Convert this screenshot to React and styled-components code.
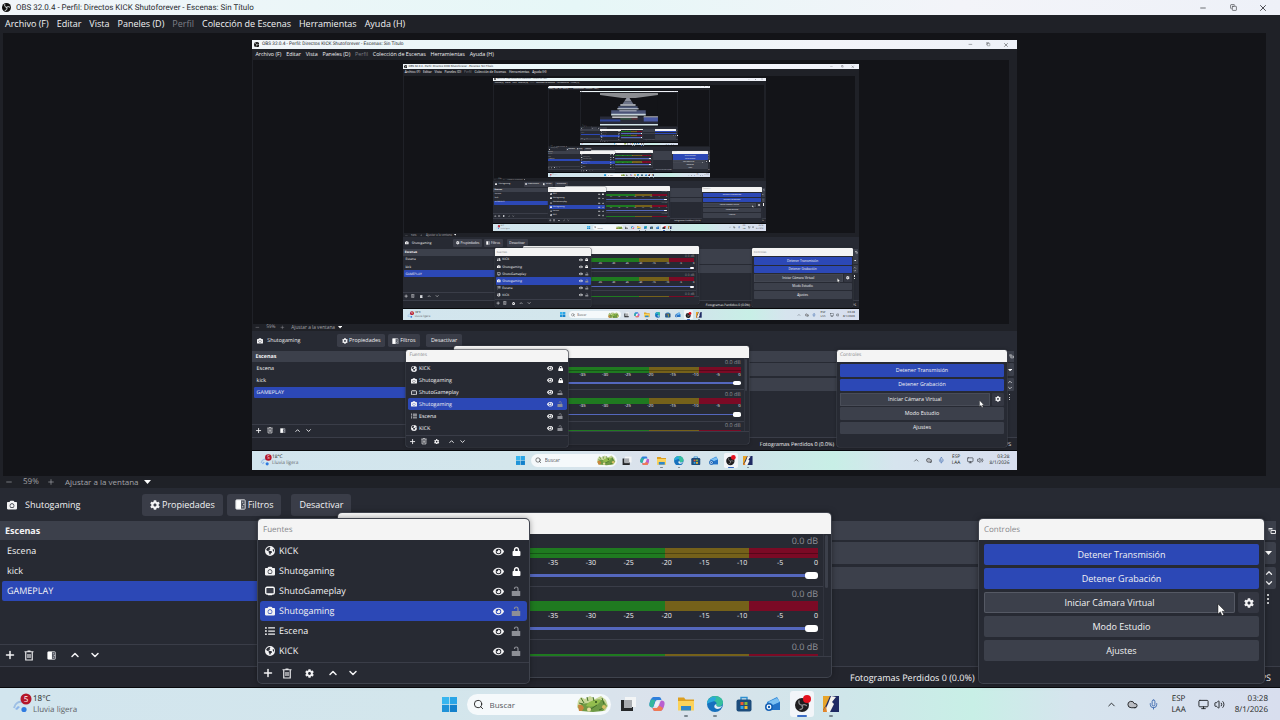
import styled, { createGlobalStyle, css } from "styled-components"
import { useId } from "react"
import { FaCamera, FaCog, FaEye, FaListUl, FaLock } from "react-icons/fa"
import { FaEarthAmericas } from "react-icons/fa6"
import {
  ChevronDown,
  ChevronUp,
  Cloud,
  Copy,
  Mic,
  Minus,
  Monitor,
  Plus,
  Search,
  Volume2,
  X,
} from "lucide-react"

// how many times the captured desktop shows up inside its own preview,
// past this it is only a few pixels wide and gets drawn as a shape
const MAX_DEPTH = 5

const MENU = [
  { label: "Archivo (F)" },
  { label: "Editar" },
  { label: "Vista" },
  { label: "Paneles (D)" },
  { label: "Perfil", disabled: true },
  { label: "Colección de Escenas" },
  { label: "Herramientas" },
  { label: "Ayuda (H)" },
]

const SCENES = ["Escena", "kick", "GAMEPLAY"]

const SOURCES = [
  { name: "KICK", icon: FaEarthAmericas, locked: true },
  { name: "Shutogaming", icon: FaCamera, locked: true },
  { name: "ShutoGameplay", icon: DisplayIcon },
  { name: "Shutogaming", icon: FaCamera, selected: true },
  { name: "Escena", icon: FaListUl },
  { name: "KICK", icon: FaEarthAmericas },
]

const TICKS = [-35, -30, -25, -20, -15, -10, -5, 0]

export default function App() {
  return (
    <>
      <GlobalStyle />
      <Desktop depth={0} />
    </>
  )
}

function Desktop({ depth }) {
  return (
    <Screen $nested={depth > 0}>
      <ObsWindow>
        <TitleBar>
          <ObsLogo size={9} />
          <Title>
            OBS 32.0.4 - Perfil: Directos KICK Shutoforever - Escenas: Sin Título
          </Title>
          <WindowButton aria-label="Minimizar">
            <Minus size={8} strokeWidth={2} />
          </WindowButton>
          <WindowButton aria-label="Restaurar">
            <Copy size={7} strokeWidth={2} />
          </WindowButton>
          <WindowButton aria-label="Cerrar">
            <X size={10} strokeWidth={2} />
          </WindowButton>
        </TitleBar>

        <MenuBar>
          {MENU.map(({ label, disabled }) => (
            <MenuItem key={label} disabled={disabled}>
              {label}
            </MenuItem>
          ))}
        </MenuBar>

        <Preview>
          <Canvas>
            {depth < MAX_DEPTH ? <Desktop depth={depth + 1} /> : <Tunnel />}
          </Canvas>
        </Preview>

        <ZoomBar>
          <IconButton aria-label="Alejar">
            <Minus size={8} />
          </IconButton>
          <ZoomValue>59%</ZoomValue>
          <IconButton aria-label="Acercar">
            <Plus size={8} />
          </IconButton>
          <ZoomMode>
            Ajustar a la ventana
            <Caret />
          </ZoomMode>
        </ZoomBar>

        <ContextBar>
          <ContextSource>
            <FaCamera size={10} />
            Shutogaming
          </ContextSource>
          <ContextButton>
            <FaCog size={10} />
            Propiedades
          </ContextButton>
          <ContextButton>
            <FilterIcon size={11} />
            Filtros
          </ContextButton>
          <ContextButton $spaced>Desactivar</ContextButton>
        </ContextBar>

        <Docks>
          <ScenesDock />
          <TransitionsDock />
        </Docks>

        <StatusBar>
          <StatusText>Fotogramas Perdidos 0 (0.0%)</StatusText>
          <StatusText>FPS</StatusText>
        </StatusBar>

        <MixerWindow />
        <SourcesWindow />
        <ControlsWindow />
      </ObsWindow>
      <TaskBar />
    </Screen>
  )
}

function ScenesDock() {
  return (
    <Dock>
      <DockHeader>Escenas</DockHeader>
      <List $grow>
        {SCENES.map((name) => (
          <SceneRow key={name} $selected={name === "GAMEPLAY"}>
            {name}
          </SceneRow>
        ))}
      </List>
      <DockToolbar>
        <ListButtons>
          <FilterIcon size={9} />
        </ListButtons>
      </DockToolbar>
    </Dock>
  )
}

function TransitionsDock() {
  return (
    <Dock>
      <DockHeader>
        <DockHeaderIcon aria-label="Desacoplar">
          <UndockIcon />
        </DockHeaderIcon>
      </DockHeader>
      <TransitionFields>
        <Field>
          <FieldSelect aria-label="Transición" />
          <Caret />
        </Field>
        <Field>
          <FieldInput aria-label="Duración" />
          <Spinner>
            <ChevronUp size={10} strokeWidth={3} />
            <ChevronDown size={10} strokeWidth={3} />
          </Spinner>
        </Field>
        <MoreButton aria-label="Más opciones">
          <Dot />
          <Dot />
          <Dot />
        </MoreButton>
      </TransitionFields>
    </Dock>
  )
}

function ListButtons({ children }) {
  return (
    <>
      <IconButton aria-label="Añadir">
        <Plus size={12} strokeWidth={3} />
      </IconButton>
      <IconButton aria-label="Eliminar">
        <TrashIcon />
      </IconButton>
      <IconButton aria-label="Opciones" $wide>
        {children}
      </IconButton>
      <IconButton aria-label="Subir">
        <ChevronUp size={12} strokeWidth={3} />
      </IconButton>
      <IconButton aria-label="Bajar">
        <ChevronDown size={12} strokeWidth={3} />
      </IconButton>
    </>
  )
}

function SourcesWindow() {
  return (
    <SourcesFrame>
      <FloatTitle>Fuentes</FloatTitle>
      <List>
        {SOURCES.map(({ name, icon: Icon, locked, selected }, i) => (
          <SourceRow key={i} $selected={selected}>
            <Icon size={10} />
            <SourceName>{name}</SourceName>
            <FaEye size={11} />
            <LockSlot $locked={locked}>
              {locked ? <FaLock size={9} /> : <UnlockedIcon size={10} />}
            </LockSlot>
          </SourceRow>
        ))}
      </List>
      <DockToolbar>
        <ListButtons>
          <FaCog size={9} />
        </ListButtons>
      </DockToolbar>
    </SourcesFrame>
  )
}

function MixerWindow() {
  return (
    <MixerFrame>
      <FloatTitle />
      <MixerBody>
        <Channels>
          <Channel active />
          <Channel />
          <Channel folded />
        </Channels>
        <ScrollTrack>
          <ScrollThumb />
        </ScrollTrack>
      </MixerBody>
    </MixerFrame>
  )
}

function Channel({ active, folded }) {
  const id = useId()

  // only the top of the last channel fits in the panel
  if (folded) {
    return (
      <ChannelBox $folded>
        <ChannelLevel as="span">0.0 dB</ChannelLevel>
        <MeterBar />
      </ChannelBox>
    )
  }

  return (
    <ChannelBox>
      <ChannelLevel htmlFor={id}>0.0 dB</ChannelLevel>
      <MeterBar $stereo={active} />
      <Scale>
        {TICKS.map((tick) => (
          <Tick key={tick}>{tick}</Tick>
        ))}
      </Scale>
      <Fader id={id} type="range" min="0" max="100" defaultValue="100" />
    </ChannelBox>
  )
}

function ControlsWindow() {
  return (
    <ControlsFrame>
      <FloatTitle>Controles</FloatTitle>
      <ControlsBody>
        <ControlButton $active>Detener Transmisión</ControlButton>
        <ControlButton $active>Detener Grabación</ControlButton>
        <ControlRow>
          <ControlButton $hover>Iniciar Cámara Virtual</ControlButton>
          <GearButton aria-label="Configurar cámara virtual">
            <FaCog size={10} />
          </GearButton>
          <Pointer viewBox="0 0 10 16">
            <path
              d="M1 1v11.5l2.7-2.4 1.9 4.3 2-.9-1.9-4.1h3.5z"
              fill="#fff"
              stroke="#111"
              strokeWidth="0.5"
            />
          </Pointer>
        </ControlRow>
        <ControlButton>Modo Estudio</ControlButton>
        <ControlButton>Ajustes</ControlButton>
      </ControlsBody>
    </ControlsFrame>
  )
}

function TaskBar() {
  return (
    <Bar>
      <Weather>
        <WeatherIcon />
        <WeatherText>
          <span>18°C</span>
          <Muted>Lluvia ligera</Muted>
        </WeatherText>
      </Weather>
      <Apps>
        <AppButton aria-label="Inicio">
          <StartIcon />
        </AppButton>
        <SearchBox>
          <Search size={11} color="#222" strokeWidth={2} />
          <SearchInput placeholder="Buscar" aria-label="Buscar" />
          <SearchArt />
        </SearchBox>
        <AppButton aria-label="Vista de tareas">
          <TaskViewIcon />
        </AppButton>
        <AppButton aria-label="Copilot">
          <CopilotIcon />
        </AppButton>
        <AppButton aria-label="Explorador" $running>
          <FolderIcon />
        </AppButton>
        <AppButton aria-label="Edge" $running>
          <EdgeIcon />
        </AppButton>
        <AppButton aria-label="Store">
          <StoreIcon />
        </AppButton>
        <AppButton aria-label="Outlook">
          <MailIcon />
        </AppButton>
        <AppButton aria-label="OBS Studio" $running $current>
          <ObsTaskIcon />
        </AppButton>
        <AppButton aria-label="Juego" $running>
          <GameIcon />
        </AppButton>
      </Apps>
      <Tray>
        <ChevronUp size={11} />
        <Cloud size={11} fill="#b9bcc2" />
        <Mic size={11} color="#3a67ae" />
        <TrayText>
          <span>ESP</span>
          <span>LAA</span>
        </TrayText>
        <TrayGroup>
          <Monitor size={11} />
          <Volume2 size={11} />
        </TrayGroup>
        <Clock>
          <span>03:28</span>
          <span>8/1/2026</span>
        </Clock>
      </Tray>
    </Bar>
  )
}

/* the far end of the mirrored previews */
function Tunnel() {
  return (
    <svg width="764" height="430" viewBox="0 0 57 32">
      <path d="M0 0h57v32H0z" fill="#131418" />
      <path d="M0 0h57v2l-22 3H22L0 2z" fill="#8b8d91" />
      <path d="M26 5h3l2 3h-7z" fill="#8f93a0" />
      <path d="M24 8h7l2 3H22z" fill="#6d7488" />
      <path d="M20 11h15v1.500H20z" fill="#c3c9d2" />
      <path d="M18 13h19v3H18z" fill="#4d5878" />
      <path d="M17 15h21v1H17z" fill="#cdd5dc" />
      <path d="M11 17h34v4H11z" fill="#4a5377" />
      <path d="M19 17h17v1H19z" fill="#b7bbc6" />
      <path d="M11 20.500h34V22H11z" fill="#c5d3da" />
      <path d="M0 23h57v8H0z" fill="#282b38" />
      <path d="M0 26h20v2H0z" fill="#2f459c" />
      <path d="M12 23h25v1.200H12zM43 23h14v1H43z" fill="#f0f0f0" />
      <path d="M43 24h14v4H43z" fill="#4a5aa5" />
      <path d="M20 25h11v1H20z" fill="#3a6a45" />
      <path d="M31 25h6v1h-6z" fill="#7a3b3d" />
      <path d="M0 30.500h57V32H0z" fill="#d5e6ea" />
    </svg>
  )
}

/* icons */

function ObsLogo({ size }) {
  return (
    <svg width={size} height={size} viewBox="0 0 20 20">
      <circle cx="10" cy="10" r="10" fill="#111" />
      <g fill="none" stroke="#e8eef0" strokeWidth="2.2" strokeLinecap="round">
        <path d="M6 3.500c-1 3.500 1 6 4 6" />
        <path d="M17 9c-2.800-2-6-1-7 1.500" />
        <path d="M7 16.500c3 0 5-2.500 3.800-5.500" />
      </g>
    </svg>
  )
}

function Caret() {
  return (
    <svg width="7" height="4" viewBox="0 0 7 4">
      <path d="M0 0h7L3.500 4z" fill="#fff" />
    </svg>
  )
}

function DisplayIcon({ size }) {
  return (
    <svg width={size} height={size} viewBox="0 0 20 20">
      <rect x="1.500" y="2.500" width="17" height="13.500" rx="2.500" fill="#3a3d48" stroke="#fff" strokeWidth="2.600" />
      <path d="M6 16h8v2.500H6z" fill="#fff" />
    </svg>
  )
}

function UnlockedIcon({ size }) {
  return (
    <svg width={size} height={size} viewBox="0 0 20 20">
      <rect x="1.500" y="10" width="17" height="10" rx="1" fill="currentColor" />
      <path d="M7 6V5.500a3.500 3.500 0 0 1 7 0V11" fill="none" stroke="currentColor" strokeWidth="2.400" />
    </svg>
  )
}

function FilterIcon({ size }) {
  return (
    <svg width={size} height={size} viewBox="0 0 20 20">
      <rect x="1.500" y="1.500" width="17" height="17" rx="1.500" fill="#50545f" stroke="#d5d6da" strokeWidth="1.800" />
      <path d="M2 2h9v16H2z" fill="#fff" />
      <path d="M13 5h2v2h-2zM15 9h2v2h-2zM13 13h2v2h-2z" fill="#d5d6da" />
    </svg>
  )
}

function TrashIcon() {
  return (
    <svg width="10" height="11" viewBox="0 0 20 22" fill="none" stroke="#e8e8ea" strokeWidth="2.400">
      <path d="M1 3.500h18M7 2h6M3.500 4v16h13V4M8 8v8M12 8v8" />
    </svg>
  )
}

function UndockIcon() {
  return (
    <svg width="8" height="8" viewBox="0 0 16 16">
      <path d="M1 2h8v3H1z" fill="#e8e8ea" />
      <path d="M6 7h9v6H6z" fill="none" stroke="#e8e8ea" strokeWidth="2" />
      <path d="M2 4v4h4" fill="none" stroke="#a5a7ad" strokeWidth="1.400" />
    </svg>
  )
}

function WeatherIcon() {
  return (
    <svg width="20" height="22" viewBox="0 0 20 22">
      <path d="M2 15c1-5 5-7 9-6" fill="none" stroke="#9dbfe4" strokeWidth="2" />
      <path d="M3 16l3-3 2 1-3 3z" fill="#8db6ea" />
      <circle cx="12" cy="16.500" r="2.600" fill="#2f7be0" />
      <circle cx="14" cy="6" r="5.500" fill="#b5162a" />
      <text x="14" y="9" textAnchor="middle" fontSize="8" fill="#fff">
        5
      </text>
    </svg>
  )
}

function StartIcon() {
  return (
    <svg width="15" height="15" viewBox="0 0 16 16">
      <path d="M0 0h7.600v7.600H0z" fill="#38b6ef" />
      <path d="M8.400 0H16v7.600H8.400z" fill="#2aa5e6" />
      <path d="M0 8.400h7.600V16H0z" fill="#1f93d8" />
      <path d="M8.400 8.400H16V16H8.400z" fill="#1380cb" />
    </svg>
  )
}

function SearchArt() {
  return (
    <svg width="32" height="18" viewBox="0 0 32 18">
      <path d="M1 6l3-4 4 2 5-3 5 3 6-3 5 4 2 6-3 5H3l-3-4z" fill="#c9d89a" />
      <path d="M1 12c5-6 8-2 13-5s8-3 13-1l3 5-4 5-10 1-12-1z" fill="#6f9a45" />
      <path d="M9 11c3-6 9-6 15-6-2 5-8 8-15 6z" fill="#93bd4e" />
      <path d="M4 3l3 5M10 2l1 4M25 3l2 6M16 2l1 4M22 15l7-3M14 14l6-4M2 8l4 1" stroke="#44702a" strokeWidth="1" />
      <path d="M1 10c3-1 5 0 6 3l-2 3H2z" fill="#c9853d" />
      <circle cx="12" cy="14.500" r="2" fill="#e8dca0" />
      <circle cx="27" cy="12" r="2" fill="#d8c067" />
      <circle cx="19" cy="7" r="1" fill="#2f4f1a" />
    </svg>
  )
}

function TaskViewIcon() {
  return (
    <svg width="16" height="16" viewBox="0 0 16 16">
      <path d="M5 1h11v10H5z" fill="#f3f5f6" />
      <path d="M1 4h3v7h9v4H1z" fill="#252729" />
      <path d="M4 4h8v8H4z" fill="#a9acb0" />
    </svg>
  )
}

function CopilotIcon() {
  return (
    <svg width="16" height="16" viewBox="0 0 16 16">
      <path d="M4.500 1H10c1.500 0 2 1 2.500 3H8C6.500 4 5.500 9 4 11.500 1 11.500 0 10 .5 7.500S2.500 1 4.500 1z" fill="#2f7fdc" />
      <path d="M2 3.500L6.500 4C5.500 6 5 9 4 11.500c-3 0-4-1.500-3.500-4z" fill="#35b79c" />
      <path d="M11.500 15H6c-1.500 0-2-1-2.500-3H8c1.500 0 2.500-5 4-7.500 3 0 4 1.500 3.500 4S13.500 15 11.500 15z" fill="#b85fd0" />
      <path d="M11.500 15H6c-1.500 0-2-1-2.500-3H8l2-2.500 4 2.500c-.6 1.800-1.500 3-2.500 3z" fill="#ef7a54" />
      <path d="M6.500 5.500h3.800L9 10.500H5.500z" fill="#f0eef4" />
    </svg>
  )
}

function FolderIcon() {
  return (
    <svg width="16" height="16" viewBox="0 0 16 16">
      <path d="M0 1.500h6l1.500 2H16V14H0z" fill="#dd9f20" />
      <path d="M0 5h16v9.500H0z" fill="#fbd25a" />
      <path d="M3 10h10v4.500H3z" fill="#2f86c9" />
    </svg>
  )
}

function EdgeIcon() {
  return (
    <svg width="16" height="16" viewBox="0 0 16 16">
      <circle cx="8" cy="8" r="8" fill="#1670bd" />
      <path d="M0 8C0 3 4 0 8 0c5 0 8 3 8 6.500C16 9 14 10.500 11.500 10.500S9 9 9.500 8C10 5.500 7 4.500 5 5 2 5.500 0 7 0 8z" fill="#36bf9d" />
      <path d="M0 8c0-4 3.500-7 8-7 2 1 1 3-1 4S0 7 0 8z" fill="#2ba7de" />
      <path d="M9.500 8c-.8 1 0 2.800 2 2.800 1.500 0 3-.3 3.700-.8-1 2-3 3-4.700 3C7 13 6 9 9.500 8z" fill="#e2eef4" />
    </svg>
  )
}

function StoreIcon() {
  return (
    <svg width="16" height="16" viewBox="0 0 16 16">
      <path d="M5 4V1.500h6V4" fill="none" stroke="#2f8fd0" strokeWidth="1.400" />
      <rect x="0.500" y="3.500" width="15" height="12" rx="2" fill="#1c4c7c" />
      <path d="M4.500 6h3v3h-3z" fill="#ee5a33" />
      <path d="M8.500 6h3v3h-3z" fill="#86b93b" />
      <path d="M4.500 10h3v3h-3z" fill="#32a5e5" />
      <path d="M8.500 10h3v3h-3z" fill="#f7bd2b" />
    </svg>
  )
}

function MailIcon() {
  return (
    <svg width="16" height="16" viewBox="0 0 16 16">
      <path d="M2 6l10-5 3 5v8H3z" fill="#2c86d8" />
      <path d="M3 6l9-4 3 4-7 3z" fill="#7dc0f2" />
      <path d="M6 10l9-4v8H6z" fill="#2473c8" />
      <circle cx="4" cy="11" r="4" fill="#1560b4" />
      <circle cx="4" cy="11" r="1.800" fill="none" stroke="#fff" strokeWidth="1.200" />
    </svg>
  )
}

function ObsTaskIcon() {
  return (
    <svg width="18" height="18" viewBox="0 0 18 18">
      <circle cx="9" cy="10" r="7" fill="#1f1d1f" />
      <g fill="none" stroke="#8b8b8e" strokeWidth="1.300" strokeLinecap="round">
        <path d="M6 6c-.6 2.500.7 4 3 4.200" />
        <path d="M13.500 10.500c-2-1.500-3.500-1-4.500.6" />
        <path d="M7 14.500c2 0 3.200-1.500 2.400-3.600" />
      </g>
      <circle cx="14" cy="4" r="4" fill="#e3101e" />
    </svg>
  )
}

function GameIcon() {
  return (
    <svg width="16" height="16" viewBox="0 0 16 16">
      <path d="M0 0h16v16H0z" fill="#1f2a63" />
      <path d="M0 0h7L3 9l-3 5z" fill="#e8a52a" />
      <path d="M8 0l5 1-4 5 2 2-4 8H1l4-8z" fill="#f4f3ee" />
      <path d="M0 14l3-4 1 6H0z" fill="#e0862c" />
    </svg>
  )
}

/* styles */

const GlobalStyle = createGlobalStyle`
  * {
    box-sizing: border-box;
  }

  body {
    margin: 0;
    background: #131418;
    overflow: hidden;
  }

  button, input, select {
    margin: 0;
    padding: 0;
    border: 0;
    background: none;
    color: inherit;
    font: inherit;
  }

  svg {
    display: block;
    flex: none;
  }
`

const Screen = styled.div`
  display: flex;
  flex-direction: column;
  width: 100%;
  height: 100vh;
  font-family: "Open Sans", "Noto Sans", sans-serif;
  font-size: 9px;
  line-height: 12px;
  color: #f2f2f4;
  text-rendering: geometricPrecision;

  /* a full desktop shrunk to the size of the preview */
  ${({ $nested }) =>
    $nested &&
    css`
      width: 1280px;
      height: 720px;
      zoom: 0.597;
    `}
`

const ObsWindow = styled.main`
  position: relative;
  flex: 1;
  min-height: 0;
  display: flex;
  flex-direction: column;
  background: #1f2127;
  border-bottom: 1px solid #08090c;
`

const TitleBar = styled.header`
  display: flex;
  align-items: center;
  height: 15px;
  padding: 0 2px;
  background: linear-gradient(90deg, #f1f5f9, #e6f7f7 45%, #f3f4f9 75%, #eef1f8);
  color: #2b2d31;
`

const Title = styled.span`
  flex: 1;
  padding-left: 5px;
  font-family: Roboto, sans-serif;
  font-size: 8px;
`

const WindowButton = styled.button`
  display: flex;
  align-items: center;
  justify-content: center;
  width: 30px;
  height: 14px;
`

const MenuBar = styled.nav`
  display: flex;
  align-items: center;
  gap: 8px;
  height: 18px;
  padding: 0 5px;
`

const MenuItem = styled.button`
  white-space: nowrap;

  &:disabled {
    color: #7d7f86;
  }
`

const Preview = styled.section`
  flex: 1;
  min-height: 0;
  display: flex;
  align-items: center;
  justify-content: center;
  padding-top: 1px;
  background: #131418;
  border: solid #1f2127;
  border-width: 0 14px 0 3px;
`

const Canvas = styled.div`
  flex: none;
  background: #131418;
`

const ZoomBar = styled.div`
  display: flex;
  align-items: center;
  gap: 10px;
  height: 12px;
  padding: 0 5px;
  color: #a3a4a9;
  font-size: 8px;
`

const ZoomValue = styled.span`
  width: 14px;
`

const ZoomMode = styled.button`
  display: flex;
  align-items: center;
  gap: 5px;
`

const ContextBar = styled.div`
  display: flex;
  align-items: center;
  gap: 4px;
  height: 33px;
  padding: 0 7px;
  background: #272a33;
`

const ContextSource = styled.div`
  display: flex;
  align-items: center;
  gap: 8px;
  width: 131px;
`

const ContextButton = styled.button`
  display: flex;
  align-items: center;
  gap: 2px;
  height: 22px;
  margin-left: ${({ $spaced }) => ($spaced ? "6px" : "0")};
  padding: 0 8px;
  border-radius: 3px;
  background: #3a3d48;
`

const Docks = styled.div`
  display: grid;
  grid-template-columns: 1fr 1fr;
  height: 146px;
  padding-right: 4px;
  padding-bottom: 1px;
  background: #272a33;
  border-bottom: 1px solid #3a3d48;
`

const Dock = styled.section`
  display: flex;
  flex-direction: column;
  min-width: 0;
`

const DockHeader = styled.div`
  display: flex;
  align-items: center;
  height: 19px;
  padding: 0 5px;
  background: #3c404b;
  font-weight: 700;
`

const DockHeaderIcon = styled.button`
  margin-left: auto;
  margin-right: -5px;
`

const List = styled.ul`
  flex: ${({ $grow }) => ($grow ? 1 : "none")};
  margin: 0;
  padding: 1px 2px;
  list-style: none;
`

const SceneRow = styled.li`
  display: flex;
  align-items: center;
  height: 20px;
  padding-left: 5px;
  border-radius: 2px;
  background: ${({ $selected }) => ($selected ? "#2c48b6" : "transparent")};
`

const DockToolbar = styled.div`
  display: flex;
  align-items: center;
  gap: 8px;
  height: 21px;
  padding: 0 4px;
  border-top: 1px solid #3a3d48;
`

const IconButton = styled.button`
  display: flex;
  align-items: center;
  justify-content: center;
  width: ${({ $wide }) => ($wide ? "19px" : "auto")};
  min-width: 8px;
`

const TransitionFields = styled.div`
  display: flex;
  flex-direction: column;
  gap: 3px;
  padding-top: 2px;
`

const Field = styled.div`
  display: flex;
  align-items: center;
  height: 22px;
  padding-right: 4px;
  background: #3c404b;
  border-radius: 2px;
`

const FieldSelect = styled.select`
  flex: 1;
  height: 100%;
  appearance: none;
  outline: none;
`

const FieldInput = styled.input`
  flex: 1;
  height: 100%;
  outline: none;
`

const Spinner = styled.span`
  display: flex;
  flex-direction: column;
  margin-right: -2px;
`

const MoreButton = styled.button`
  display: flex;
  flex-direction: column;
  gap: 2px;
  align-self: flex-end;
  padding: 2px 7px;
`

const Dot = styled.span`
  width: 2px;
  height: 2px;
  border-radius: 1px;
  background: #fff;
`

const StatusBar = styled.footer`
  display: flex;
  align-items: center;
  justify-content: space-between;
  height: 20px;
  padding: 2px 9px 0 850px;
  background: #23252d;
`

const StatusText = styled.span`
  white-space: nowrap;
`

/* undocked panels float over the main window */
const FloatFrame = styled.section`
  position: absolute;
  display: flex;
  flex-direction: column;
  border-radius: 4px;
  background: #272a33;
  box-shadow: 0 0 0 1px #3f434d, 0 0 6px rgba(0, 0, 0, 0.5);
`

const SourcesFrame = styled(FloatFrame)`
  left: 258px;
  bottom: 4px;
  width: 271px;
  height: 164px;
`

const MixerFrame = styled(FloatFrame)`
  left: 338px;
  bottom: 10px;
  width: 493px;
  height: 164px;
`

const ControlsFrame = styled(FloatFrame)`
  right: 16px;
  bottom: 4px;
  width: 285px;
  height: 164px;
`

const FloatTitle = styled.div`
  display: flex;
  align-items: center;
  flex: none;
  height: 21px;
  padding: 0 5px;
  border-radius: 4px 4px 0 0;
  background: #f4f4f4;
  color: #85868a;
  font-size: 8px;
`

const SourceRow = styled.li`
  display: flex;
  align-items: center;
  gap: 4px;
  height: 20px;
  padding: 0 6px 0 5px;
  border-radius: 3px;
  background: ${({ $selected }) => ($selected ? "#2c48b6" : "transparent")};
`

const SourceName = styled.span`
  flex: 1;
`

const LockSlot = styled.span`
  display: flex;
  justify-content: flex-end;
  width: 13px;
  color: ${({ $locked }) => ($locked ? "#fff" : "#8d8f96")};
`

const MixerBody = styled.div`
  display: flex;
  flex: none;
  height: 123px;
  border-bottom: 1px solid #3a3d48;
`

const Channels = styled.div`
  flex: 1;
`

const ScrollTrack = styled.div`
  width: 8px;
  padding: 1px 3px 0 1px;
  border-left: 1px solid #31343e;
`

const ScrollThumb = styled.div`
  height: 53px;
  border-radius: 2px;
  background: #3c404b;
`

const ChannelBox = styled.div`
  display: flex;
  flex-direction: column;
  height: ${({ $folded }) => ($folded ? "16px" : "53px")};
  padding: 1px 5px 0 215px;
  overflow: ${({ $folded }) => ($folded ? "hidden" : "visible")};
  border-bottom: ${({ $folded }) => ($folded ? "none" : "1px solid #3a3d48")};
`

const ChannelLevel = styled.label`
  align-self: flex-end;
  flex: none;
  height: 13px;
  color: #8f9197;
`

/* the bar starts at -35 dB, lower levels sit behind the sources panel */
const MeterBar = styled.div`
  flex: none;
  height: 10px;
  margin-left: -24px;
  background: linear-gradient(90deg, #1f7a20 47%, #75611a 47% 76%, #7b0a25 76%);

  ${({ $stereo }) =>
    $stereo &&
    css`
      background:
        linear-gradient(transparent 5px, rgba(0, 0, 0, 0.3) 5px 6px, transparent 6px),
        linear-gradient(90deg, #1f7a20 47%, #75611a 47% 76%, #7b0a25 76%);
    `}
`

const Scale = styled.div`
  display: flex;
  justify-content: space-between;
  height: 11px;
  line-height: 11px;
  font-size: 7px;
`

const Tick = styled.span`
  display: flex;
  justify-content: center;
  width: 0;

  &:last-child {
    justify-content: flex-end;
  }
`

const Fader = styled.input`
  align-self: stretch;
  height: 12px;
  margin-left: -24px;
  appearance: none;

  &::-webkit-slider-runnable-track {
    height: 3px;
    border-radius: 1px;
    background: #5467bd;
  }

  &::-webkit-slider-thumb {
    appearance: none;
    width: 13px;
    height: 7px;
    margin-top: -2px;
    border-radius: 3px;
    background: #fff;
  }
`

const ControlsBody = styled.div`
  display: flex;
  flex-direction: column;
  gap: 3px;
  padding: 4px 5px;
`

const ControlRow = styled.div`
  position: relative;
  display: flex;
  gap: 3px;
`

const ControlButton = styled.button`
  flex: 1 0 auto;
  height: 21px;
  border-radius: 2px;
  background: ${({ $active }) => ($active ? "#2c48b6" : "#3c404b")};
  box-shadow: ${({ $hover }) => ($hover ? "inset 0 0 0 1px #555964" : "none")};
`

const GearButton = styled.button`
  display: flex;
  align-items: center;
  justify-content: center;
  width: 21px;
  border-radius: 2px;
  background: #343742;
`

const Pointer = styled.svg`
  position: absolute;
  right: 33px;
  top: 11px;
  width: 9px;
  height: 14px;
`

const Bar = styled.footer`
  display: grid;
  grid-template-columns: 1fr auto 1fr;
  align-items: center;
  height: 32px;
  padding: 0 12px;
  background: linear-gradient(
    90deg,
    #d2e5ee,
    #d3e6ec 35%,
    #dbe2ec 52%,
    #cfe6ea 66%,
    #c8efe6 76%,
    #d6e4ee 84%,
    #d8deee
  );
  color: #1d1f22;
  font-size: 8px;
  line-height: 11px;
`

const Weather = styled.div`
  display: flex;
  align-items: center;
`

const WeatherText = styled.div`
  display: flex;
  flex-direction: column;
  padding-left: 1px;
`

const Muted = styled.span`
  color: #5f6468;
`

const Apps = styled.div`
  display: flex;
  align-items: center;
  gap: 5px;
`

const AppButton = styled.button`
  position: relative;
  display: flex;
  align-items: center;
  justify-content: center;
  width: 24px;
  height: 26px;
  border-radius: 3px;
  background: ${({ $current }) => ($current ? "#f2f5f9" : "transparent")};

  &::after {
    content: "";
    display: ${({ $running }) => ($running ? "block" : "none")};
    position: absolute;
    bottom: 0;
    width: ${({ $current }) => ($current ? "10px" : "4px")};
    height: 2px;
    border-radius: 1px;
    background: ${({ $current }) => ($current ? "#3a6bc4" : "#7b8790")};
  }
`

const SearchBox = styled.div`
  display: flex;
  align-items: center;
  gap: 6px;
  width: 144px;
  height: 21px;
  padding: 0 2px 0 6px;
  border-radius: 11px;
  background: #f5f9fb;
`

const SearchInput = styled.input`
  flex: 1;
  min-width: 0;
  font-size: 8px;

  &::placeholder {
    color: #55595d;
    opacity: 1;
  }
`

const Tray = styled.div`
  display: flex;
  align-items: center;
  justify-content: flex-end;
  gap: 10px;
`

const TrayText = styled.div`
  display: flex;
  flex-direction: column;
  align-items: center;
  padding: 0 2px;
`

const TrayGroup = styled.div`
  display: flex;
  gap: 5px;
`

const Clock = styled(TrayText)`
  align-items: flex-end;
  padding: 0;
`
